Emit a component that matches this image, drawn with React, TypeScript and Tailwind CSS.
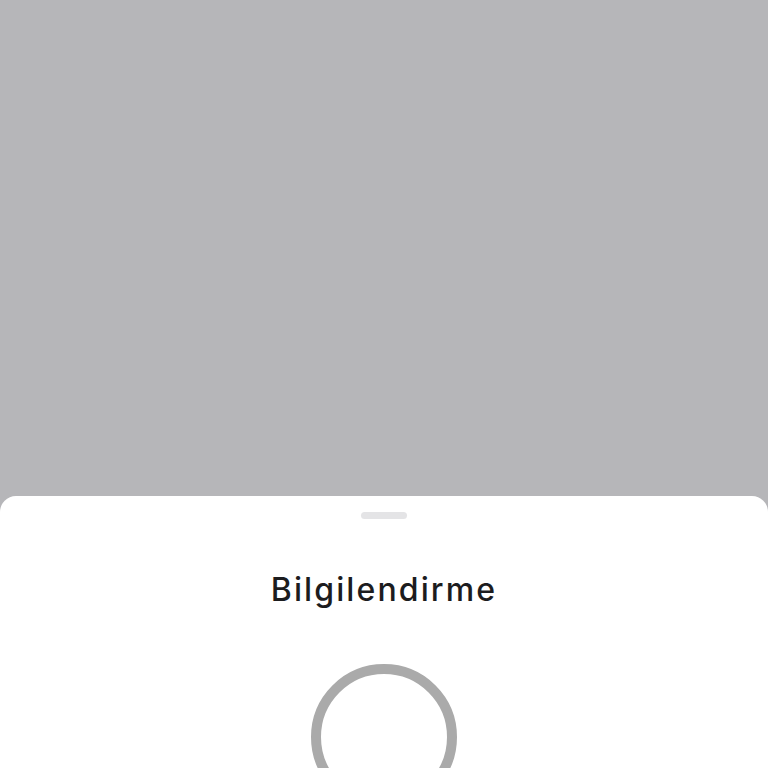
export default function App() {
  return (
    <div className="h-[768px] overflow-hidden bg-[#b6b6b9] flex flex-col" style={{ fontFamily: 'Inter, "Noto Sans", sans-serif' }}>
      <div className="h-[496px] shrink-0" />
      <div className="flex-1 bg-white rounded-t-[16px] flex flex-col items-center pt-[16px]">
        <div className="w-[46px] h-[7px] rounded-full bg-[#e4e4e6]" />
        <h1 className="mt-[53px] text-[32px] leading-[36px] font-medium text-[#1c1c1e] tracking-[2.1px]">Bilgilendirme</h1>
        <div className="mt-[56px] w-[146px] h-[146px] shrink-0 rounded-full border-[10px] border-[#aaaaaa]" />
      </div>
    </div>
  )
}
